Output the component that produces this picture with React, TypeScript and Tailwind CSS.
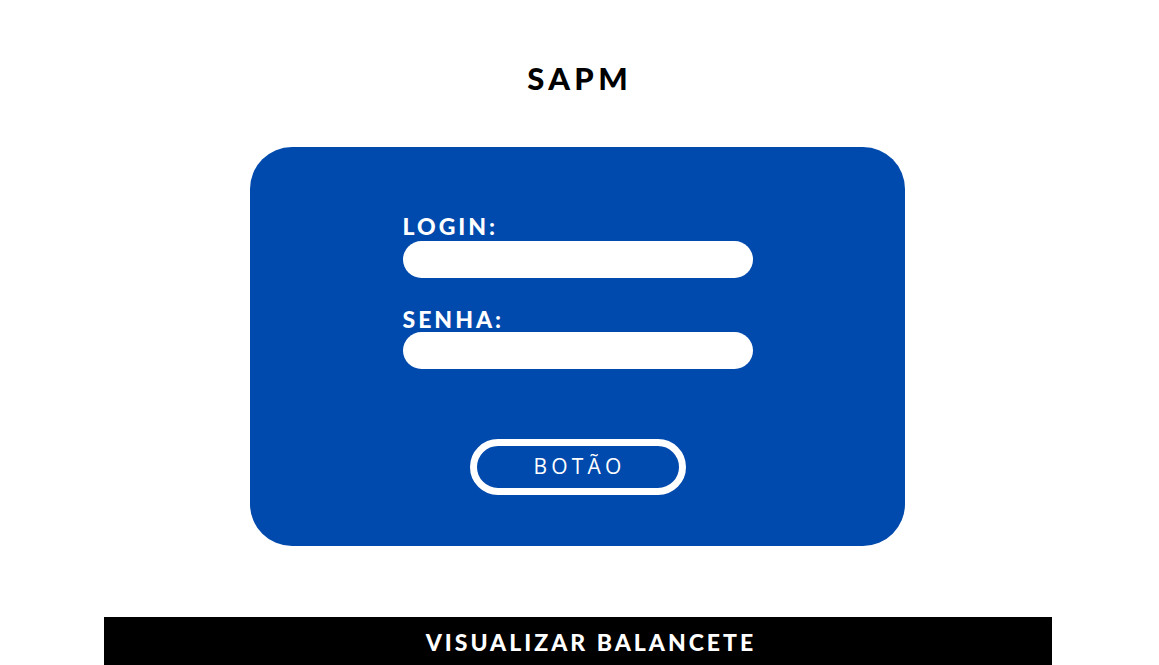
export default function App() {
  return (
    <div className="flex h-[665px] w-full flex-col items-center overflow-hidden bg-white pr-[4px] font-['Lato',sans-serif]">
      <h1 className="mt-[60px] h-[36px] pl-[0.14em] text-[31px] font-black leading-[36px] tracking-[0.14em] text-black">
        SAPM
      </h1>
      <div className="mt-[51px] flex h-[399px] w-[655px] shrink-0 flex-col items-center rounded-[42px] bg-[#004aad]">
        <form className="mt-[64px] flex w-[350px] flex-col">
          <label className="h-[30px] text-[23px] font-black leading-[30px] tracking-[0.13em] text-white">
            LOGIN:
          </label>
          <input className="h-[37px] w-full rounded-full bg-white px-4 outline-none" />
          <label className="mt-[28px] h-[26px] text-[23px] font-black leading-[26px] tracking-[0.13em] text-white">
            SENHA:
          </label>
          <input
            type="password"
            className="h-[37px] w-full rounded-full bg-white px-4 outline-none"
          />
        </form>
        <button
          type="button"
          className="mt-[70px] flex h-[56px] w-[216px] items-center justify-center rounded-full border-[7px] border-white pl-[0.2em] font-['Open_Sans',sans-serif] text-[21px] tracking-[0.2em] text-white"
        >
          BOTÃO
        </button>
      </div>
      <div className="mt-[71px] flex h-[50px] w-[948px] shrink-0 items-center justify-center bg-black pl-[24px]">
        <span className="pl-[0.12em] text-[23px] font-black tracking-[0.13em] text-white">
          VISUALIZAR BALANCETE
        </span>
      </div>
    </div>
  );
}
